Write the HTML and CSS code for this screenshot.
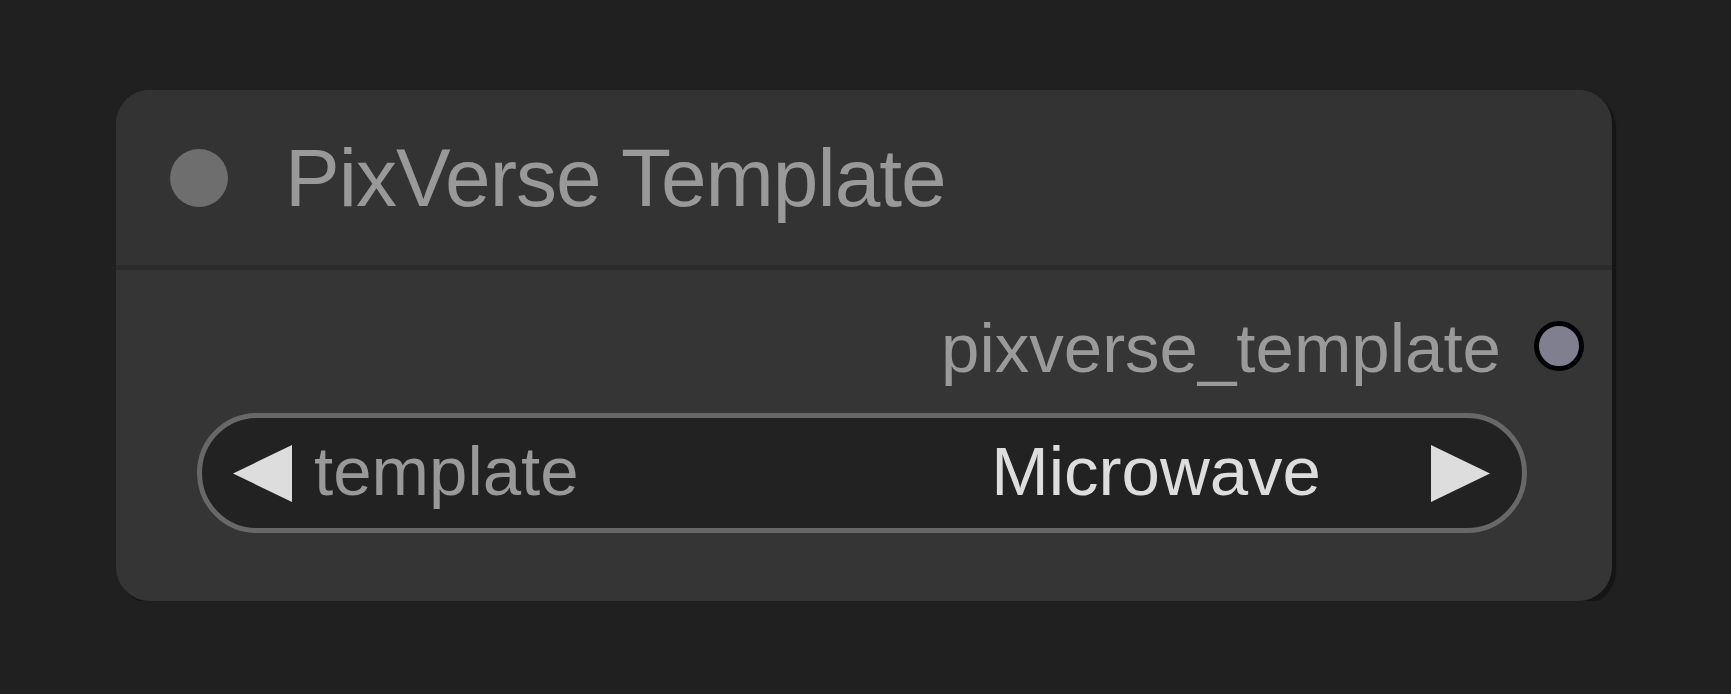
FILE: index.html
```html
<!DOCTYPE html>
<html>
<head>
<meta charset="utf-8">
<link rel="stylesheet" href="styles.css">
</head>
<body>
<div class="node">
  <div class="title">
    <span class="title-dot"></span>
    <span class="title-text">PixVerse Template</span>
  </div>
  <div class="body">
    <div class="output-row">
      <span class="output-label">pixverse_template</span>
      <span class="slot"></span>
    </div>
    <div class="widget">
      <svg class="arrow" width="59" height="57" viewBox="0 0 59 57"><polygon points="0,28.5 59,0 59,57"/></svg>
      <span class="w-label">template</span>
      <span class="w-value">Microwave</span>
      <svg class="arrow" width="59" height="57" viewBox="0 0 59 57"><polygon points="0,0 59,28.5 0,57"/></svg>
    </div>
  </div>
</div>
</body>
</html>
```
FILE: styles.css
```css
body {
  margin: 0;
  background: #202020;
  font-family: "Liberation Sans", Arial, sans-serif;
}
.node {
  margin: 90px 0 0 116px;
  width: 1496px;
  height: 511px;
  background: #353535;
  border-radius: 34px;
  box-shadow: 4px 4px 1px #151515;
  overflow: hidden;
  display: flex;
  flex-direction: column;
}
.title {
  height: 175px;
  background: #333333;
  border-bottom: 5px solid #2b2b2b;
  display: flex;
  align-items: center;
  padding-left: 54px;
}
.title-dot {
  width: 58px;
  height: 58px;
  border-radius: 50%;
  background: #6e6e6e;
  flex: none;
}
.title-text {
  margin-left: 57px;
  font-size: 82px;
  letter-spacing: -1px;
  line-height: 1;
  color: #999999;
}
.body {
  flex: 1;
  padding: 46px 28px 0 81px;
  display: flex;
  flex-direction: column;
}
.output-row {
  display: flex;
  justify-content: flex-end;
  align-items: flex-start;
  height: 60px;
}
.output-label {
  font-size: 69px;
  line-height: 60px;
  margin-top: 3px;
  margin-right: 33px;
  color: #9a9a9a;
}
.slot {
  width: 50px;
  height: 50px;
  box-sizing: border-box;
  border: 5px solid #000;
  border-radius: 50%;
  background: #7f7f90;
  margin-top: 5px;
}
.widget {
  margin-top: 37px;
  margin-right: 57px;
  height: 120px;
  box-sizing: border-box;
  border: 5px solid #686868;
  border-radius: 60px;
  background: #222222;
  display: flex;
  align-items: center;
  padding: 0 32px 0 31px;
}
.arrow {
  fill: #dddddd;
  flex: none;
}
.w-label {
  margin-left: 22px;
  font-size: 69px;
  line-height: 1;
  padding-bottom: 4px;
  color: #999999;
}
.w-value {
  margin-left: auto;
  margin-right: 110px;
  font-size: 69px;
  line-height: 1;
  padding-bottom: 4px;
  color: #dddddd;
}
```
